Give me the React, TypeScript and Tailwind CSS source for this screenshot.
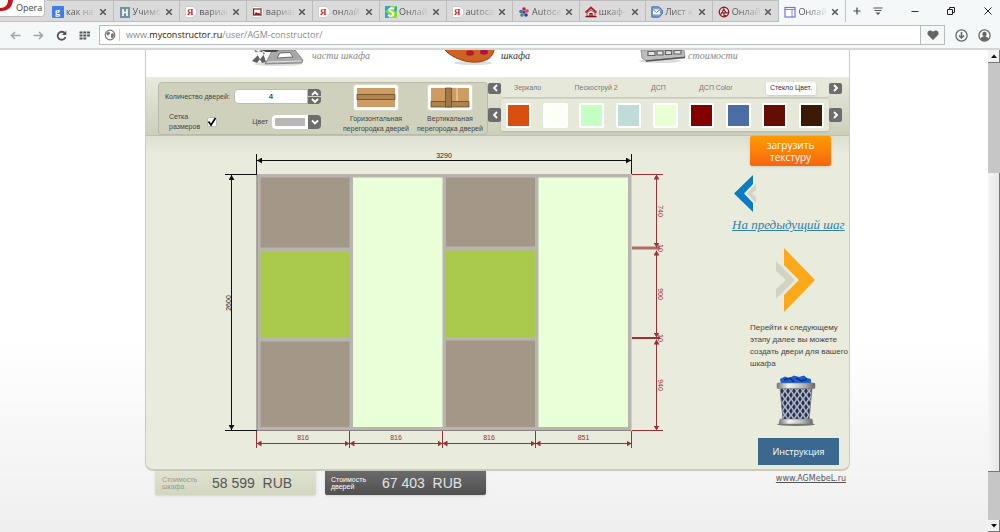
import type { ReactNode } from 'react';

interface BrowserTab {
  title: string;
  icon: ReactNode;
  active?: boolean;
}

const yandexIcon = (
  <svg viewBox="0 0 12 12" className="h-3 w-3 shrink-0">
    <path d="M0.5 0.5 H8 L11.5 4 V8 L8 11.5 H0.5 Z" fill="#fff" stroke="#b9b9b9" strokeWidth="0.6" />
    <text x="2" y="9" fontSize="9" fontWeight="bold" fontFamily="Liberation Serif, serif" fill="#d8232a">Я</text>
  </svg>
);

const tabs: BrowserTab[] = [
  {
    title: 'как на',
    icon: (
      <svg viewBox="0 0 12 12" className="h-3 w-3 shrink-0">
        <rect width="12" height="12" rx="1" fill="#3f7de8" />
        <text x="3" y="9" fontSize="10" fontWeight="bold" fontFamily="Liberation Serif, serif" fill="#fff">g</text>
      </svg>
    ),
  },
  {
    title: 'Учимс',
    icon: (
      <svg viewBox="0 0 12 12" className="h-3 w-3 shrink-0">
        <rect x="1" y="1" width="10" height="11" fill="#6d94a5" />
        <path d="M4 3 V10 M8 3 V10 M4 6.5 H8" stroke="#fff" strokeWidth="1.6" />
      </svg>
    ),
  },
  { title: 'вариан', icon: yandexIcon },
  {
    title: 'вариан',
    icon: (
      <svg viewBox="0 0 12 12" className="h-3 w-3 shrink-0">
        <path d="M0.5 0.5 H8 L11.5 4 V8 L8 11.5 H0.5 Z" fill="#fff" stroke="#b9b9b9" strokeWidth="0.6" />
        <rect x="1.6" y="3" width="7.4" height="6" fill="#fff" stroke="#8e1d1d" strokeWidth="1.2" />
        <path d="M2 9 L4 6 L6 7.5 L7 6.5 L9 9 Z" fill="#8e1d1d" />
      </svg>
    ),
  },
  { title: 'онлай', icon: yandexIcon },
  {
    title: 'Онлай',
    icon: (
      <svg viewBox="0 0 12 12" className="h-3 w-3 shrink-0">
        <rect width="12" height="12" fill="#2ba5e0" />
        <path d="M0 6 C4 6 5 12 3 12 H12 V4 C10 8 7 3 12 0 H6 Z" fill="#8fdc2a" />
        <path d="M9 3 C6 1 3 3.5 5 5 C7 6.5 9.5 7 8 9 C6.5 10.5 4 10 3 9" fill="none" stroke="#fff" strokeWidth="1.8" />
      </svg>
    ),
  },
  { title: 'autoca', icon: yandexIcon },
  {
    title: 'Autoca',
    icon: (
      <svg viewBox="0 0 12 12" className="h-3 w-3 shrink-0">
        <circle cx="6" cy="3" r="1.8" fill="#c9252b" />
        <circle cx="9" cy="5" r="1.8" fill="#e0447c" />
        <circle cx="8" cy="9" r="1.8" fill="#2a3fae" />
        <circle cx="4" cy="9" r="1.8" fill="#3c9b3c" />
        <circle cx="3" cy="5.5" r="1.8" fill="#3a6bd0" />
        <circle cx="6" cy="6.3" r="1.4" fill="#5a2a7a" />
      </svg>
    ),
  },
  {
    title: 'шкаф-',
    icon: (
      <svg viewBox="0 0 12 12" className="h-3 w-3 shrink-0">
        <path d="M0.5 6.5 L6 1.5 L11.5 6.5" fill="none" stroke="#b3202a" strokeWidth="1.8" />
        <path d="M2 7 L6 4 L10 7 V10 H2 Z" fill="#f4e4e4" stroke="#b3202a" strokeWidth="0.8" />
        <path d="M5 10 V7.5 H7 V10 M0.5 10.7 H11.5" fill="none" stroke="#7c1018" strokeWidth="1.2" />
      </svg>
    ),
  },
  {
    title: 'Лист «',
    icon: (
      <svg viewBox="0 0 12 12" className="h-3 w-3 shrink-0">
        <path d="M0.8 0.8 H8 L11.3 4.2 V8 L8 11.2 H0.8 Z" fill="#7d9ed3" stroke="#4a6fae" strokeWidth="1" />
        <rect x="2" y="3.4" width="7" height="5" fill="#fff" />
        <path d="M2 3.6 L5.5 6.5 L9 3.6" fill="none" stroke="#4a6fae" strokeWidth="0.9" />
      </svg>
    ),
  },
  {
    title: 'Онлай',
    icon: (
      <svg viewBox="0 0 12 12" className="h-3 w-3 shrink-0">
        <circle cx="6" cy="6" r="4.7" fill="#f5eaea" stroke="#8e1f24" strokeWidth="1.4" />
        <path d="M2.5 9 L5.8 3 L8 7 M4 6.8 H10 M6 6.8 V9.5 H8.5" fill="none" stroke="#8e1f24" strokeWidth="1.2" />
      </svg>
    ),
  },
  {
    title: 'Онлай',
    active: true,
    icon: (
      <svg viewBox="0 0 12 12" className="h-3 w-3 shrink-0">
        <rect x="1" y="1.5" width="10" height="9.5" fill="#fff" stroke="#7a74d8" strokeWidth="1.2" />
        <path d="M1 3.5 H11 M8 3.5 V11" stroke="#7a74d8" strokeWidth="0.9" />
      </svg>
    ),
  },
];

const materials = ['Зеркало', 'Пескоструй 2', 'ДСП', 'ДСП Color', 'Стекло Цвет.'];

const swatches = [
  { name: 'Оранжевый', fill: 'bg-[#d94f12]' },
  { name: 'Белый', fill: 'bg-[#fbfff6]' },
  { name: 'Мятный', fill: 'bg-[#c5ffc6]' },
  { name: 'Голубой', fill: 'bg-[#bfdcd6]' },
  { name: 'Салатовый', fill: 'bg-[#e9ffd4]' },
  { name: 'Бордовый', fill: 'bg-[#820000]' },
  { name: 'Синий', fill: 'bg-[#4a6da6]' },
  { name: 'Вишнёвый', fill: 'bg-[#650d02]' },
  { name: 'Коричневый', fill: 'bg-[#3b1a02]' },
];

const BROWN = '#a39788';
const GREEN = '#a9c94a';
const GLASS = '#e9ffd8';

const panels = [
  { x: 260.5, y: 177.5, w: 89, h: 70, fill: BROWN },
  { x: 260.5, y: 251.5, w: 89, h: 86, fill: GREEN },
  { x: 260.5, y: 341.5, w: 89, h: 85.5, fill: BROWN },
  { x: 353, y: 177.5, w: 89.5, h: 249.5, fill: GLASS },
  { x: 446, y: 177.5, w: 89, h: 69, fill: BROWN },
  { x: 446, y: 250.5, w: 89, h: 86.5, fill: GREEN },
  { x: 446, y: 340.5, w: 89, h: 86.5, fill: BROWN },
  { x: 538.5, y: 177.5, w: 89.5, h: 249.5, fill: GLASS },
];

const doorWidths = [
  { from: 256.5, to: 349.5, label: '816' },
  { from: 349.5, to: 442.5, label: '816' },
  { from: 442.5, to: 535.5, label: '816' },
  { from: 535.5, to: 631.5, label: '851' },
];

const sectionHeights = [
  { from: 174.5, to: 247.5, label: '740' },
  { from: 250.5, to: 337.5, label: '900' },
  { from: 339.5, to: 430.5, label: '940' },
];

function Chevron({ d }: { d: string }) {
  return (
    <svg viewBox="0 0 8 8" className="h-2 w-2">
      <path d={d} fill="none" stroke="#fff" strokeWidth="1.8" />
    </svg>
  );
}

function TabStrip() {
  return (
    <div className="flex h-[22px] bg-[#f5f8f9] font-['Open_Sans',sans-serif] text-[9px] text-[#555]">
      <div className="w-[47px] shrink-0 border-b border-[#c2c2c2] bg-[#dadada]">
        <button className="flex h-[17px] w-[45px] items-center rounded-br-sm border-r border-b border-[#bdbdbd] bg-white text-[#444]">
          <svg viewBox="0 0 14 16" className="h-4 w-[14px]">
            <path d="M8 0 H13 C12.5 7 8 11.5 0 11 V8 C5 8 8 5 8 0 Z" fill="#c4161c" />
          </svg>
          <span className="pl-[2px]">Opera</span>
        </button>
      </div>
      <div className="grid min-w-0 flex-1 grid-cols-12">
        {tabs.map((tab, i) => (
          <div
            key={i}
            className={
              tab.active
                ? 'flex min-w-0 items-center border-r border-[#c2c2c2] bg-[#f5f8f9] pt-[2px] pr-1 pl-[5px]'
                : 'flex min-w-0 items-center border-t border-r border-b border-[#bcbcbc] bg-[#dadada] pt-[1px] pr-1 pl-[5px]'
            }
          >
            {tab.icon}
            <span className="min-w-0 flex-1 overflow-hidden mask-r-from-30% mask-r-to-100% pl-[2px] whitespace-nowrap">
              {tab.title}
            </span>
            <button aria-label="Закрыть вкладку" className="flex h-4 w-3 items-center justify-center">
              <svg viewBox="0 0 8 8" className="h-2 w-2">
                <path d="M1.2 1.2 L6.8 6.8 M6.8 1.2 L1.2 6.8" stroke="#555" strokeWidth="1.5" />
              </svg>
            </button>
          </div>
        ))}
      </div>
      <div className="flex w-[154px] shrink-0 items-center justify-between pr-[7px] pl-[6px]">
        <button aria-label="Новая вкладка">
          <svg viewBox="0 0 10 10" className="h-[10px] w-[10px]">
            <path d="M5 1.5 V8.5 M1.5 5 H8.5" stroke="#444" strokeWidth="1.2" />
          </svg>
        </button>
        <button aria-label="Меню вкладок" className="-ml-4">
          <svg viewBox="0 0 10 10" className="h-[10px] w-[10px]">
            <path d="M0.5 2 H9.5 M1.5 4.5 H8.5" stroke="#555" strokeWidth="1.2" />
            <path d="M2.5 6.5 H7.5 L5 9 Z" fill="#555" />
          </svg>
        </button>
        <button aria-label="Свернуть">
          <svg viewBox="0 0 10 10" className="h-[10px] w-[10px]">
            <path d="M1.5 5.5 H8.5" stroke="#333" />
          </svg>
        </button>
        <button aria-label="Развернуть">
          <svg viewBox="0 0 10 10" className="h-[10px] w-[10px]">
            <path d="M1.5 3.5 H6.5 V8.5 H1.5 Z M3.5 3.5 V1.5 H8.5 V6.5 H6.5" fill="none" stroke="#222" />
          </svg>
        </button>
        <button aria-label="Закрыть">
          <svg viewBox="0 0 10 10" className="h-[10px] w-[10px]">
            <path d="M1.5 1.5 L8.5 8.5 M8.5 1.5 L1.5 8.5" stroke="#222" />
          </svg>
        </button>
      </div>
    </div>
  );
}

function AddressBar() {
  return (
    <div className="flex h-7 items-center border-b-2 border-[#d5d7d7] bg-[#f5f8f9] pr-[9px] pl-[10px]">
      <div className="flex w-[89px] items-center gap-3">
        <button aria-label="Назад">
          <svg viewBox="0 0 11 11" className="h-[11px] w-[11px]">
            <path d="M10.5 5.5 H1.5 M5 2 L1.5 5.5 L5 9" fill="none" stroke="#a2a5a5" strokeWidth="1.6" />
          </svg>
        </button>
        <button aria-label="Вперёд">
          <svg viewBox="0 0 11 11" className="h-[11px] w-[11px]">
            <path d="M0.5 5.5 H9.5 M6 2 L9.5 5.5 L6 9" fill="none" stroke="#a2a5a5" strokeWidth="1.6" />
          </svg>
        </button>
        <button aria-label="Обновить">
          <svg viewBox="0 0 11 11" className="h-[11px] w-[11px]">
            <path d="M9 3.5 A4 4 0 1 0 9.5 7" fill="none" stroke="#555" strokeWidth="1.8" />
            <path d="M10.3 0.8 V5 H6 Z" fill="#555" />
          </svg>
        </button>
        <button aria-label="Экспресс-панель">
          <svg viewBox="0 0 11 11" className="h-[11px] w-[11px]">
            <path d="M0.5 2.5 H11 M0.5 5.5 H11 M0.5 8.5 H8" stroke="#555" strokeWidth="2" strokeDasharray="3 0.8" />
          </svg>
        </button>
      </div>
      <div className="flex h-5 min-w-0 flex-1 items-center border border-[#b9bcbc] bg-white">
        <span className="flex w-5 items-center justify-center border-r border-[#ccc]">
          <svg viewBox="0 0 12 12" className="h-3 w-3">
            <circle cx="6" cy="6" r="4.8" fill="#fff" stroke="#777" strokeWidth="1.2" />
            <path d="M2 4 L5 2.5 L6 4 L5 6.5 L3 6 Z M7 5 L9.5 4 L10 7 L8 9.5 L7 8 Z" fill="#777" />
          </svg>
        </span>
        <span
          role="textbox"
          aria-label="Адрес"
          className="min-w-0 flex-1 truncate pl-[6px] font-['Open_Sans',sans-serif] text-[9px] text-[#8a8a8a]"
        >
          www.<span className="text-[#222]">myconstructor.ru</span>/user/AGM-constructor/
        </span>
        <button aria-label="В закладки" className="flex h-full w-6 items-center justify-center border-l border-[#b9bcbc] bg-[#f5f8f9]">
          <svg viewBox="0 0 12 12" className="h-3 w-3">
            <path d="M6 11 L1 6 C-1 3 2.5 -0.5 6 2.8 C9.5 -0.5 13 3 11 6 Z" fill="#666" />
          </svg>
        </button>
      </div>
      <div className="flex w-[46px] items-center justify-end gap-[10px]">
        <button aria-label="Загрузки">
          <svg viewBox="0 0 13 13" className="h-[13px] w-[13px]">
            <circle cx="6.5" cy="6.5" r="5.6" fill="none" stroke="#666" strokeWidth="1.3" />
            <path d="M6.5 3 V8.5 M4 6.5 L6.5 9 L9 6.5" fill="none" stroke="#666" strokeWidth="1.5" />
          </svg>
        </button>
        <button aria-label="Профиль">
          <svg viewBox="0 0 13 13" className="h-[13px] w-[13px]">
            <circle cx="6.5" cy="6.5" r="5.6" fill="none" stroke="#666" strokeWidth="1.3" />
            <circle cx="6.5" cy="5" r="2.2" fill="#666" />
            <path d="M2.5 10 C3 7.5 5.5 8 6 7 H7 C7.5 8 10 7.5 10.5 10 A5 5 0 0 1 2.5 10" fill="#666" />
          </svg>
        </button>
      </div>
    </div>
  );
}

function Steps() {
  return (
    <div className="grid h-[27px] grid-cols-3 items-start overflow-hidden bg-white pr-4 pl-[102px] font-['Liberation_Serif',serif] text-[10px] leading-[12px] text-[#888] italic">
      <a href="#parts" className="flex gap-2">
        <svg viewBox="0 0 56 17" className="h-[17px] w-14">
          <ellipse cx="30" cy="14" rx="24" ry="2" fill="#ddd" />
          <path d="M6 0 L17 3 L9 13 L4 11 L10 5 Z M8 2 L14 13 L18 12 L14 0 Z" fill="#606060" />
          <path d="M17 14 L24 1 L47 0 L55 10 L54 13 Z" fill="#a8a8a8" stroke="#666" strokeWidth="0.6" />
          <path d="M29 8 L32 3 L42 2.5 L45 7 Z" fill="#fff" stroke="#555" strokeWidth="0.8" />
          <path d="M19 12 L53 11" stroke="#e4e4e4" />
          <path d="M13 0 H31 L28 2 H18 Z" fill="#444" />
        </svg>
        <span>части шкафа</span>
      </a>
      <a href="#wardrobe" className="flex gap-1 text-[#333]">
        <svg viewBox="0 0 54 17" className="h-[17px] w-[54px]">
          <ellipse cx="30" cy="13" rx="19" ry="2" fill="#ddd" />
          <path d="M2 0 C9 8 23 13 35 12 C44 11 50 7 51 0 Z" fill="#cf6220" />
          <path d="M2 0 C9 8 23 13 35 12 C44 11 50 7 51 0" fill="none" stroke="#8d3c10" />
          <ellipse cx="27" cy="3" rx="4" ry="2.8" fill="#b01c2c" />
          <ellipse cx="41" cy="2" rx="4" ry="2.8" fill="#a3164c" />
        </svg>
        <span>шкафа</span>
      </a>
      <a href="#price" className="flex">
        <svg viewBox="0 0 50 17" className="h-[17px] w-[50px]">
          <ellipse cx="22" cy="11" rx="21" ry="2" fill="#ddd" />
          <path d="M3 0 H46 L47 7 L8 11 L4 8 Z" fill="#bdbdbd" stroke="#777" strokeWidth="0.7" />
          <path d="M8 11 L47 7.5" stroke="#555" strokeWidth="1.5" />
          <path d="M10 1.5 H17 V5.5 H10 Z M19 1 H25 V5 H19 Z M27.5 0.7 H33.5 V4.5 H27.5 Z M36 0.5 H43 V4 H36 Z" fill="#e2e2e2" stroke="#666" strokeWidth="1.2" />
        </svg>
        <span>стоимости</span>
      </a>
    </div>
  );
}

function PartitionButton({ label, children }: { label: [string, string]; children: ReactNode }) {
  return (
    <button className="flex w-[74px] flex-col items-center text-center">
      <svg viewBox="0 0 46 27" className="mb-[3px] h-[27px] w-[46px]">
        <rect x="0.5" y="0.5" width="45" height="26" rx="3" fill="#fff" stroke="#d8d8cc" />
        {children}
      </svg>
      <span className="whitespace-nowrap">
        {label[0]}
        <br />
        {label[1]}
      </span>
    </button>
  );
}

function Settings() {
  return (
    <div className="flex w-[330px] shrink-0 rounded border border-[#b9bba9] bg-[#cfd1bd] text-[7px] leading-[10px] text-[#444]">
      <div className="flex w-[174px] flex-col justify-between pt-[6px] pr-3 pb-[2px] pl-[6px]">
        <div className="flex items-center gap-1">
          <label htmlFor="doors" className="whitespace-nowrap">Количество дверей:</label>
          <div className="flex min-w-0 flex-1">
            <input
              id="doors"
              defaultValue="4"
              className="h-[15px] w-full min-w-0 rounded-l border border-[#bbb] bg-white text-center text-[8px] text-black"
            />
            <div className="flex w-[13px] shrink-0 flex-col gap-px">
              <button aria-label="Больше" className="flex h-[7px] items-center justify-center rounded-tr-sm bg-[#6d6d6d]">
                <Chevron d="M1 6 L4 3 L7 6" />
              </button>
              <button aria-label="Меньше" className="flex h-[7px] items-center justify-center rounded-br-sm bg-[#6d6d6d]">
                <Chevron d="M1 2 L4 5 L7 2" />
              </button>
            </div>
          </div>
        </div>
        <div className="flex items-center pl-1">
          <label htmlFor="grid" className="w-[38px] shrink-0">
            Сетка
            <br />
            размеров
          </label>
          <span className="relative flex h-[10px] w-[10px] shrink-0">
            <input id="grid" type="checkbox" defaultChecked className="h-[10px] w-[10px] appearance-none rounded-xs border border-[#bbb] bg-white" />
            <svg viewBox="0 0 10 10" className="pointer-events-none absolute inset-0 h-[10px] w-[10px]">
              <path d="M1.5 4.5 L4 8 L8.5 1" fill="none" stroke="#000" strokeWidth="1.8" />
            </svg>
          </span>
          <label htmlFor="color" className="ml-auto pr-1">Цвет</label>
          <div className="flex">
            <select id="color" className="h-[14px] w-9 appearance-none rounded-l border-[3px] border-white bg-[#b9b6b6] text-transparent">
              <option>Серый</option>
            </select>
            <span className="flex h-[14px] w-[13px] items-center justify-center rounded-r-sm bg-[#6d6d6d]">
              <Chevron d="M1 2.5 L4 5.5 L7 2.5" />
            </span>
          </div>
        </div>
      </div>
      <div className="flex flex-1 justify-between pt-[1px] pl-[6px]">
        <PartitionButton label={['Горизонтальная', 'перегородка дверей']}>
          <rect x="4" y="4" width="38" height="19" fill="#cc9c62" />
          <path d="M4 10.5 H42 V15.5 H4 Z" fill="#ad8350" stroke="#6b4a22" strokeWidth="0.8" />
        </PartitionButton>
        <PartitionButton label={['Вертикальная', 'перегородка дверей']}>
          <rect x="4" y="4" width="38" height="19" fill="#cc9c62" />
          <path d="M4 17.5 H42 V23 H4 Z" fill="#ad8350" stroke="#6b4a22" strokeWidth="0.8" />
          <path d="M18.5 4 H24.5 V23 H18.5 Z" fill="#a07848" stroke="#6b4a22" strokeWidth="0.8" />
          <path d="M30 4 V17" stroke="#f3ddbb" />
        </PartitionButton>
      </div>
    </div>
  );
}

function ArrowButton({ label, d, tall }: { label: string; d: string; tall?: boolean }) {
  return (
    <button
      aria-label={label}
      className={
        tall
          ? 'flex h-[14px] w-[13px] shrink-0 items-center justify-center rounded-xs bg-[#6d6d6d]'
          : 'flex h-[11px] w-[13px] shrink-0 items-center justify-center rounded-xs bg-[#6d6d6d]'
      }
    >
      <Chevron d={d} />
    </button>
  );
}

function Palette() {
  return (
    <div className="flex min-w-0 flex-1 flex-col gap-[2px]">
      <div className="flex items-center">
        <ArrowButton label="Предыдущие материалы" d="M6 1 L3 4 L6 7" />
        <div className="flex h-[18px] min-w-0 flex-1 items-center justify-between rounded-xs bg-[#e6e8da] pr-[13px] pl-[13px] text-[7px] leading-[8px] text-[#777] shadow">
          {materials.map((name) => (
            <button
              key={name}
              className={
                name === 'Стекло Цвет.'
                  ? 'h-[13px] rounded-xs bg-white px-1 whitespace-nowrap text-[#333] shadow'
                  : 'whitespace-nowrap'
              }
            >
              {name}
            </button>
          ))}
        </div>
        <ArrowButton label="Следующие материалы" d="M2 1 L5 4 L2 7" />
      </div>
      <div className="flex items-center">
        <ArrowButton label="Предыдущие цвета" d="M6 1 L3 4 L6 7" tall />
        <div className="flex h-8 min-w-0 flex-1 items-center justify-between rounded-xs bg-[#e6e8da] px-[5px] shadow">
          {swatches.map(({ name, fill }) => (
            <button key={name} aria-label={name} className={`h-[25px] w-[25px] rounded-xs border-2 border-white ${fill}`} />
          ))}
        </div>
        <ArrowButton label="Следующие цвета" d="M2 1 L5 4 L2 7" tall />
      </div>
    </div>
  );
}

function Drawing() {
  return (
    <svg
      viewBox="215 145 460 310"
      role="img"
      aria-label="Чертёж дверей шкафа"
      className="mt-[9px] ml-[69px] h-[310px] w-[460px] shrink-0 text-[7px]"
      textAnchor="middle"
    >
      <defs>
        <marker id="black" viewBox="0 0 5 6" refX="5" refY="3" markerWidth="5" markerHeight="6" markerUnits="userSpaceOnUse" orient="auto-start-reverse">
          <path d="M0 0 L5 3 L0 6 Z" fill="#111" />
        </marker>
        <marker id="red" viewBox="0 0 5 6" refX="5" refY="3" markerWidth="5" markerHeight="6" markerUnits="userSpaceOnUse" orient="auto-start-reverse">
          <path d="M0 0 L5 3 L0 6 Z" fill="#993333" />
        </marker>
      </defs>

      {/* Doors */}
      <rect x="256.5" y="174" width="375" height="256.5" fill="#b8b5ae" />
      <path d="M257 174 V430.5 H631" fill="none" stroke="#8a8282" />
      {panels.map((p) => (
        <rect key={`${p.x}-${p.y}`} x={p.x} y={p.y} width={p.w} height={p.h} fill={p.fill} />
      ))}

      {/* Overall size */}
      <g stroke="#111" fill="none">
        <path d="M256.5 154 V174 M631.5 154 V174 M225 174.5 H257 M225 430.5 H257" />
        <path d="M257 160.5 H631" markerStart="url(#black)" markerEnd="url(#black)" />
        <path d="M231.5 175 V430" markerStart="url(#black)" markerEnd="url(#black)" />
      </g>
      <text x="444" y="158" fill="#222">3290</text>
      <text transform="translate(231 303) rotate(-90)" fill="#222">2600</text>

      {/* Door widths */}
      <path d="M256.5 431 V448" stroke="#993333" />
      {doorWidths.map((d) => (
        <g key={d.from}>
          <path d={`M${d.to} 431 V448`} stroke="#993333" />
          <path d={`M${d.from} 443.5 H${d.to}`} stroke="#993333" markerStart="url(#red)" markerEnd="url(#red)" />
          <text x={(d.from + d.to) / 2} y="440" fill="#993333">{d.label}</text>
        </g>
      ))}

      {/* Section heights */}
      <path d="M632 174.5 H663 M632 430.5 H663" stroke="#993333" />
      <path d="M632 248 H660" stroke="#b06a64" strokeWidth="3" />
      <path d="M632 338 H660" stroke="#993333" strokeWidth="2" />
      {sectionHeights.map((s) => (
        <g key={s.from}>
          <path d={`M656.5 ${s.from} V${s.to}`} stroke="#993333" markerStart="url(#red)" markerEnd="url(#red)" />
          <text transform={`translate(658 ${(s.from + s.to) / 2}) rotate(90)`} fill="#993333">{s.label}</text>
        </g>
      ))}
      <text transform="translate(658 248) rotate(90)" fill="#993333">10</text>
      <text transform="translate(658 338) rotate(90)" fill="#993333">10</text>
    </svg>
  );
}

function TrashBin() {
  return (
    <svg viewBox="0 0 40 52" className="h-[52px] w-10">
      <defs>
        <pattern id="mesh" width="6" height="8" patternUnits="userSpaceOnUse">
          <rect width="6" height="8" fill="#b4b8be" />
          <path d="M3 1 L4.8 4 L3 7 L1.2 4 Z M0 -3 L1.8 0 L0 3 Z M6 -3 L4.2 0 L6 3 Z M0 5 L1.8 8 H0 Z M6 5 L4.2 8 H6 Z" fill="#1f2f58" />
        </pattern>
        <linearGradient id="steel">
          <stop offset="0" stopColor="#777" />
          <stop offset="0.3" stopColor="#f4f4f4" />
          <stop offset="0.7" stopColor="#b5b5b5" />
          <stop offset="1" stopColor="#666" />
        </linearGradient>
      </defs>
      <ellipse cx="20" cy="49.5" rx="19" ry="1.5" fill="#77776c" />
      <path d="M5 9 L4 4 L9 1.5 L13 3 L18 0.5 L23 2 L28 0.5 L31 3 L35 4 L35 9 Z" fill="#1d5fd0" />
      <path d="M8 5 L14 3 L18 7 M20 3 L26 6 L31 4" fill="none" stroke="#0c2f86" strokeWidth="1.5" />
      <path d="M4 13 H36 L33 45 H7 Z" fill="url(#mesh)" stroke="#6c7078" strokeWidth="0.8" />
      <rect x="1" y="8" width="38" height="5.5" rx="1" fill="url(#steel)" stroke="#777" strokeWidth="0.5" />
      <path d="M4 44 H36 L37 49 H3 Z" fill="url(#steel)" stroke="#777" strokeWidth="0.5" />
    </svg>
  );
}

function Sidebar() {
  return (
    <div className="flex w-[119px] shrink-0 flex-col pl-[2px]">
      <button className="ml-[18px] h-[30px] w-[81px] rounded-xs bg-linear-to-b from-[#ff9a00] to-[#f7650f] font-['Open_Sans',sans-serif] text-[10px] leading-[12px] text-white shadow">
        загрузить
        <br />
        текстуру
      </button>
      <a href="#prev" className="mt-[9px] flex flex-col items-start font-['Liberation_Serif',serif] text-[13px] leading-[15px] whitespace-nowrap text-[#2f7fa8] italic underline">
        <svg viewBox="0 0 24 38" className="mb-1 ml-[2px] h-[38px] w-6">
          <path d="M19 0 V9 L10 18.5 L19 28 V37 L0 18.5 Z" fill="#0a7cc4" />
          <path d="M22 9 V15 L18 18.5 L22 22 V28 L13 18.5 Z" fill="#d2d4c3" />
        </svg>
        На предыдущий шаг
      </a>
      <a href="#next" className="mt-4 ml-[18px] flex flex-col text-[8px] leading-[12px] whitespace-nowrap text-[#444]">
        <svg viewBox="0 0 39 64" className="mb-[10px] ml-[26px] h-16 w-[39px]">
          <path d="M8 0 V17 L23 32 L8 47 V64 L39 32 Z" fill="#fca919" />
          <path d="M0 13 V23 L10 32 L0 41 V51 L19 32 Z" fill="#d2d4c3" />
        </svg>
        <span>
          Перейти к следующему
          <br />
          этапу далее вы можете
          <br />
          создать двери для вашего
          <br />
          шкафа
        </span>
      </a>
      <button aria-label="Корзина" className="mt-[5px] ml-[44px] w-10">
        <TrashBin />
      </button>
      <button className="mt-[11px] ml-[26px] h-[27px] w-[81px] bg-[#3b688e] font-['Open_Sans',sans-serif] text-[9px] text-white">
        Инструкция
      </button>
    </div>
  );
}

function Scrollbar() {
  return (
    <div className="flex w-3 shrink-0 flex-col bg-[#c6c6c6]">
      <button aria-label="Вверх" className="flex h-[13px] items-center justify-center border-r border-b border-[#777] bg-[#f2f2f2]">
        <svg viewBox="0 0 6 4" className="h-1 w-[6px]"><path d="M0 4 L3 0.5 L6 4 Z" fill="#111" /></svg>
      </button>
      <div className="flex flex-1 flex-col pt-[110px] pb-12">
        <div className="flex-1 border-r border-b border-[#777] bg-linear-to-r from-[#f4f4f4] to-[#e8e8e8]" />
      </div>
      <button aria-label="Вниз" className="flex h-3 items-center justify-center border-r border-b border-[#777] bg-[#f2f2f2]">
        <svg viewBox="0 0 6 4" className="h-1 w-[6px]"><path d="M0 0 L3 3.5 L6 0 Z" fill="#111" /></svg>
      </button>
    </div>
  );
}

export default function App() {
  return (
    <div className="flex h-screen flex-col overflow-hidden bg-white">
      <TabStrip />
      <AddressBar />

      <div className="flex min-h-0 flex-1">
        <div className="flex min-w-0 flex-1 justify-center overflow-hidden bg-linear-to-b from-white from-60% to-[#efefef] pl-[7px] font-['Liberation_Sans',sans-serif]">
          <div className="w-full max-w-[705px]">
            <div className="rounded-b-lg border-x border-b-2 border-[#c9cbbb] bg-[#e9ebdc]">
              <Steps />
              <div className="flex items-start border-b border-[#bfc1b0] bg-linear-to-b from-[#e9eadc] to-[#cdcfbb] pt-[2px] pr-[7px] pl-3">
                <div className="flex pt-[3px]">
                  <Settings />
                </div>
                <Palette />
              </div>
              <div className="flex justify-between rounded-b-lg bg-linear-to-b from-[#dcdecf] to-[#e9ebdc] to-5% pb-1">
                <Drawing />
                <Sidebar />
              </div>
            </div>

            {/* Prices */}
            <div className="flex items-start pr-1 pl-[10px]">
              <div className="mr-[9px] flex h-6 w-[161px] items-center rounded-b-xs bg-linear-to-b from-[#e0e3cf] to-[#d2d5bf] pl-[7px] shadow-sm">
                <span className="w-[50px] text-[7px] leading-[7px] text-[#999]">Стоимость<br />шкафа</span>
                <span className="text-[14px] whitespace-pre text-[#555]">58 599  RUB</span>
              </div>
              <div className="flex h-6 w-[161px] items-center rounded-b-xs bg-linear-to-b from-[#6b6b6b] to-[#505050] pl-[6px] shadow-sm">
                <span className="w-[51px] text-[7px] leading-[7px] text-white">Стоимость<br />дверей</span>
                <span className="text-[14px] whitespace-pre text-[#e4e4e4]">67 403  RUB</span>
              </div>
              <a href="#site" className="mt-[2px] ml-auto font-['DejaVu_Sans',sans-serif] text-[8px] text-[#555] underline">
                www.AGMebeL.ru
              </a>
            </div>
          </div>
        </div>
        <Scrollbar />
      </div>
    </div>
  );
}
